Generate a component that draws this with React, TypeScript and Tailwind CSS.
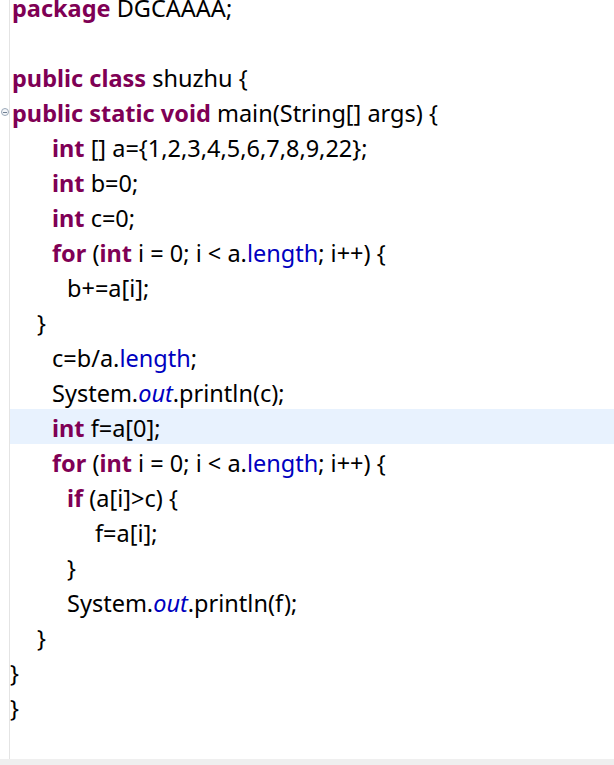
import React from "react";

type Seg = { t: string; k?: "kw" | "field" | "static" };
type Line = { indent: number; segs: Seg[]; current?: boolean };

const kw = (t: string): Seg => ({ t, k: "kw" });
const tx = (t: string): Seg => ({ t });
const fd = (t: string): Seg => ({ t, k: "field" });
const st = (t: string): Seg => ({ t, k: "static" });

const lines: Line[] = [
  { indent: 2, segs: [kw("package"), tx(" DGCAAAA;")] },
  { indent: 2, segs: [] },
  { indent: 2, segs: [kw("public"), tx(" "), kw("class"), tx(" shuzhu {")] },
  {
    indent: 2,
    segs: [kw("public"), tx(" "), kw("static"), tx(" "), kw("void"), tx(" main(String[] args) {")],
  },
  { indent: 42, segs: [kw("int"), tx(" [] a={1,2,3,4,5,6,7,8,9,22};")] },
  { indent: 42, segs: [kw("int"), tx(" b=0;")] },
  { indent: 42, segs: [kw("int"), tx(" c=0;")] },
  {
    indent: 42,
    segs: [kw("for"), tx(" ("), kw("int"), tx(" i = 0; i < a."), fd("length"), tx("; i++) {")],
  },
  { indent: 57, segs: [tx("b+=a[i];")] },
  { indent: 27, segs: [tx("}")] },
  { indent: 42, segs: [tx("c=b/a."), fd("length"), tx(";")] },
  { indent: 42, segs: [tx("System."), st("out"), tx(".println(c);")] },
  { indent: 42, current: true, segs: [kw("int"), tx(" f=a[0];")] },
  {
    indent: 42,
    segs: [kw("for"), tx(" ("), kw("int"), tx(" i = 0; i < a."), fd("length"), tx("; i++) {")],
  },
  { indent: 57, segs: [kw("if"), tx(" (a[i]>c) {")] },
  { indent: 85, segs: [tx("f=a[i];")] },
  { indent: 57, segs: [tx("}")] },
  { indent: 57, segs: [tx("System."), st("out"), tx(".println(f);")] },
  { indent: 27, segs: [tx("}")] },
  { indent: 0, segs: [tx("}")] },
  { indent: 0, segs: [tx("}")] },
];

function segClass(k?: Seg["k"]) {
  if (k === "kw") return "font-bold text-[#7f0055]";
  if (k === "field") return "text-[#0000c0]";
  if (k === "static") return "italic text-[#0000c0]";
  return "text-black";
}

export default function App() {
  return (
    <div className="w-[614px] h-[765px] bg-white overflow-hidden flex flex-col">
      <div className="flex-1 flex min-h-0">
        <div className="w-[9px] shrink-0 relative">
          {/* fold marker */}
          <div className="absolute left-[1px] top-[108px] w-[8px] h-[8px] rounded-full border border-[#9aa8b8] bg-[#f4f6f9] flex items-center justify-center">
            <div className="w-[4px] h-px bg-[#6f7f92]" />
          </div>
        </div>
        <div className="w-px shrink-0 bg-[#e4e4e4]" />
        <div
          className="flex-1 flex flex-col -mt-[11px] text-[23.5px] whitespace-pre"
          style={{ fontFamily: '"Noto Sans", "Open Sans", "Noto Sans CJK SC", sans-serif' }}
        >
          {lines.map((line, i) => (
            <div
              key={i}
              className={`h-[35px] shrink-0 flex items-center pt-[4px] ${line.current ? "bg-[#e8f2fe]" : ""}`}
              style={{ paddingLeft: line.indent }}
            >
              {line.segs.map((s, j) => (
                <span key={j} className={segClass(s.k)}>
                  {s.t}
                </span>
              ))}
            </div>
          ))}
        </div>
      </div>
      <div className="h-[6px] shrink-0 bg-[#efefef]" />
    </div>
  );
}
